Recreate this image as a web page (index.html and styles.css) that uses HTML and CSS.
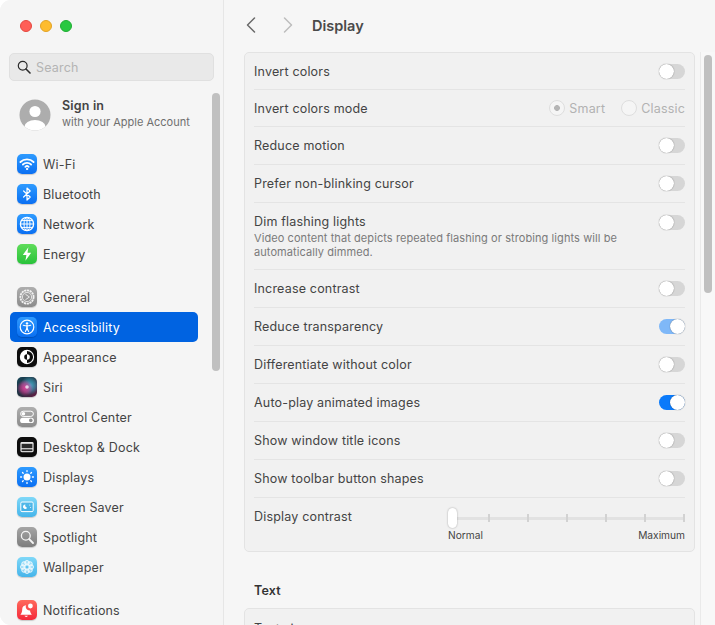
FILE: index.html
```html
<!DOCTYPE html>
<html lang="en">
<head>
    <meta charset="UTF-8">
    <meta name="viewport" content="width=device-width, initial-scale=1.0">
    <title>Display</title>
    <link rel="stylesheet" href="styles.css">
</head>
<body>
    <div class="window">
        <aside class="sidebar">
            <div class="traffic">
                <span class="light red"></span>
                <span class="light yellow"></span>
                <span class="light green"></span>
            </div>
            <div class="search">
                <svg class="search-icon" width="14" height="14" viewBox="0 0 14 14"><circle cx="5.7" cy="5.7" r="4.4" fill="none" stroke="#2b2b2b" stroke-width="1.2"/><path d="M9 9l4 4" stroke="#2b2b2b" stroke-width="1.6" stroke-linecap="round"/></svg>
                <span>Search</span>
            </div>
            <div class="account">
                <svg class="avatar" width="32" height="32" viewBox="0 0 32 32"><defs><clipPath id="av"><circle cx="16" cy="16" r="15.5"/></clipPath></defs><circle cx="16" cy="16" r="15.5" fill="#adadad"/><circle cx="16" cy="12.5" r="5.6" fill="#fff"/><ellipse cx="16" cy="27.5" rx="10.5" ry="6.5" fill="#fff" clip-path="url(#av)"/></svg>
                <div>
                    <div class="account-name">Sign in</div>
                    <div class="account-sub">with your Apple Account</div>
                </div>
            </div>

            <nav class="nav-group first">
                <a class="nav-item"><span class="icon blue"><svg width="20" height="20" viewBox="0 0 20 20" fill="none" stroke="#fff" stroke-linecap="round"><path d="M3.4 8a9.400 9.400 0 0 1 13.200 0" stroke-width="1.800"/><path d="M5.900 10.500a5.900 5.900 0 0 1 8.200 0" stroke-width="1.800"/><path d="M8.300 12.800a2.500 2.500 0 0 1 3.400 0" stroke-width="1.700"/><circle cx="10" cy="15" r=".7" fill="#fff" stroke-width="1"/></svg></span>Wi-Fi</a>
                <a class="nav-item"><span class="icon blue"><svg width="20" height="20" viewBox="0 0 20 20" fill="none" stroke="#fff" stroke-width="1.200" stroke-linejoin="round" stroke-linecap="round"><path d="M6.600 7l6.600 6-3.200 3V4l3.200 3-6.600 6"/></svg></span>Bluetooth</a>
                <a class="nav-item"><span class="icon blue"><svg width="20" height="20" viewBox="0 0 20 20" fill="none" stroke="#fff" stroke-width="1"><circle cx="10" cy="10" r="6.600" stroke-width="1.300"/><ellipse cx="10" cy="10" rx="3" ry="6.600"/><path d="M10 3.400v13.200M3.400 10h13.200M4.600 6.600h10.800M4.600 13.400h10.800"/></svg></span>Network</a>
                <a class="nav-item"><span class="icon leaf"><svg width="20" height="20" viewBox="0 0 20 20"><path d="M11.400 3.200L5.800 11h3.600l-1 5.800 5.800-8h-3.700z" fill="#fff"/></svg></span>Energy</a>
            </nav>

            <nav class="nav-group">
                <a class="nav-item"><span class="icon gray"><svg width="20" height="20" viewBox="0 0 20 20" fill="none" stroke="#f2f2f2"><circle cx="10" cy="10" r="6.600" stroke-width="1.800" stroke-dasharray="2.200 .6"/><circle cx="10" cy="10" r="4.600" stroke-width=".8"/><path d="M8.400 7.200l4 2.800-4 2.800" stroke-width=".9"/></svg></span>General</a>
                <a class="nav-item active"><span class="icon blue"><svg width="20" height="20" viewBox="0 0 20 20" fill="none" stroke="#fff" stroke-linecap="round"><circle cx="10" cy="10" r="6.800" stroke-width="1.200"/><circle cx="10" cy="6.400" r="1.200" fill="#fff" stroke="none"/><path d="M6.300 8.200c2.400.7 5 .7 7.400 0" stroke-width="1.100"/><path d="M10 8.800v2.600" stroke-width="1.500"/><path d="M10 11.200l-1.600 3.400M10 11.200l1.600 3.400" stroke-width="1.100"/></svg></span>Accessibility</a>
                <a class="nav-item"><span class="icon black"><svg width="20" height="20" viewBox="0 0 20 20"><circle cx="10" cy="10" r="6.600" fill="#0d0d0d" stroke="#fff" stroke-width="1.100"/><path d="M10 3.400a6.600 6.600 0 0 0 0 13.200z" fill="#fff"/><path d="M10 7.200a2.800 2.800 0 0 0 0 5.600z" fill="#0d0d0d"/><path d="M10 7.200a2.800 2.800 0 0 1 0 5.600z" fill="#fff"/></svg></span>Appearance</a>
                <a class="nav-item"><span class="icon siri"><svg width="20" height="20" viewBox="0 0 20 20"><circle cx="10" cy="10" r="1.800" fill="#efe9f4" fill-opacity=".85"/></svg></span>Siri</a>
                <a class="nav-item"><span class="icon gray"><svg width="20" height="20" viewBox="0 0 20 20"><rect x="3.600" y="4.200" width="12.800" height="5.200" rx="2.600" fill="none" stroke="#fff"/><circle cx="6.400" cy="6.800" r="1.800" fill="#fff"/><rect x="3.100" y="10.700" width="13.800" height="5.400" rx="2.700" fill="#fff"/><circle cx="13.800" cy="13.400" r="1.800" fill="#8e8e8e"/></svg></span>Control Center</a>
                <a class="nav-item"><span class="icon black"><svg width="20" height="20" viewBox="0 0 20 20"><rect x="3.400" y="5" width="13.200" height="10.200" rx="1.400" fill="#e8e8e8"/><rect x="4.600" y="6.800" width="10.800" height="4.400" fill="#2a2a2a"/><rect x="4.600" y="12.300" width="10.800" height="1.800" fill="#2a2a2a"/></svg></span>Desktop &amp; Dock</a>
                <a class="nav-item"><span class="icon blue"><svg width="20" height="20" viewBox="0 0 20 20" stroke="#fff" stroke-width="1.300" stroke-linecap="round"><circle cx="10" cy="10" r="3.500" fill="#fff" stroke="none"/><path d="M10 3.600v1M10 15.400v1M3.600 10h1M15.400 10h1M5.500 5.500l.7.7M13.800 13.800l.7.7M5.500 14.500l.7-.7M13.800 6.200l.7-.7"/></svg></span>Displays</a>
                <a class="nav-item"><span class="icon sky"><svg width="20" height="20" viewBox="0 0 20 20"><rect x="3.800" y="5" width="12.400" height="9.600" rx="1.200" fill="#2f9fdc" fill-opacity=".45" stroke="#fff" stroke-width="1"/><path d="M8.400 7.600a2.200 2.200 0 1 0 1.700 3.200 2.300 2.300 0 0 1-1.700-3.200z" fill="#fff"/><circle cx="12.800" cy="8" r=".6" fill="#fff"/><circle cx="13.600" cy="10.600" r=".5" fill="#fff"/></svg></span>Screen Saver</a>
                <a class="nav-item"><span class="icon gray-dark"><svg width="20" height="20" viewBox="0 0 20 20" fill="none" stroke="#f4f4f4"><circle cx="8.800" cy="8.800" r="4.400" stroke-width="1.300"/><path d="M12.200 12.200l3.800 3.800" stroke-width="1.900" stroke-linecap="round"/></svg></span>Spotlight</a>
                <a class="nav-item"><span class="icon sky"><svg width="20" height="20" viewBox="0 0 20 20" fill="#fff" fill-opacity=".35" stroke="#fff" stroke-width=".8"><circle cx="10" cy="5.800" r="2.300"/><circle cx="10" cy="14.200" r="2.300"/><circle cx="5.800" cy="10" r="2.300"/><circle cx="14.200" cy="10" r="2.300"/><circle cx="7" cy="7" r="2.300"/><circle cx="13" cy="7" r="2.300"/><circle cx="7" cy="13" r="2.300"/><circle cx="13" cy="13" r="2.300"/></svg></span>Wallpaper</a>
            </nav>

            <nav class="nav-group">
                <a class="nav-item"><span class="icon red-icon"><svg width="20" height="20" viewBox="0 0 20 20" fill="#fff"><path d="M9 5.200a4.200 4.200 0 0 0-3.800 4.200c0 2.400-.6 3.600-1.600 4.800v.6h11v-.6c-.9-1-1.400-2-1.500-3.700A3.800 3.800 0 0 1 9 5.200z"/><path d="M7.400 15.800a2 2 0 0 0 3.600 0z"/><circle cx="13.400" cy="6" r="2.400"/></svg></span>Notifications</a>
            </nav>

            <div class="scroll-thumb side-thumb"></div>
        </aside>

        <main class="content">
            <header class="toolbar">
                <svg class="chevron" width="12" height="18" viewBox="0 0 12 18" fill="none" stroke="#6a6a6a" stroke-width="1.500" stroke-linecap="round" stroke-linejoin="round"><path d="M9.500 2L2.500 9l7 7"/></svg>
                <svg class="chevron next" width="12" height="18" viewBox="0 0 12 18" fill="none" stroke="#bdbdbd" stroke-width="1.500" stroke-linecap="round" stroke-linejoin="round"><path d="M2.500 2l7 7-7 7"/></svg>
                <h1>Display</h1>
            </header>

            <div class="scroll-area">
                <section class="panel">
                    <div class="row short"><span>Invert colors</span><span class="toggle"></span></div>
                    <div class="row short">
                        <span>Invert colors mode</span>
                        <div class="radios">
                            <span class="radio checked">Smart</span>
                            <span class="radio">Classic</span>
                        </div>
                    </div>
                    <div class="row"><span>Reduce motion</span><span class="toggle"></span></div>
                    <div class="row"><span>Prefer non-blinking cursor</span><span class="toggle"></span></div>
                    <div class="row tall">
                        <div>
                            <div>Dim flashing lights</div>
                            <p class="hint">Video content that depicts repeated flashing or strobing lights will be automatically dimmed.</p>
                        </div>
                        <span class="toggle"></span>
                    </div>
                    <div class="row"><span>Increase contrast</span><span class="toggle"></span></div>
                    <div class="row"><span>Reduce transparency</span><span class="toggle on dim"></span></div>
                    <div class="row"><span>Differentiate without color</span><span class="toggle"></span></div>
                    <div class="row"><span>Auto-play animated images</span><span class="toggle on"></span></div>
                    <div class="row"><span>Show window title icons</span><span class="toggle"></span></div>
                    <div class="row"><span>Show toolbar button shapes</span><span class="toggle"></span></div>
                    <div class="row slider-row">
                        <span>Display contrast</span>
                        <div class="slider">
                            <div class="track">
                                <i></i><i></i><i></i><i></i><i></i><i></i>
                                <span class="knob"></span>
                            </div>
                            <div class="slider-labels"><span>Normal</span><span>Maximum</span></div>
                        </div>
                    </div>
                </section>

                <h2>Text</h2>
                <section class="panel">
                    <div class="row"><span>Text size</span></div>
                </section>
                <div class="scroll-thumb main-thumb"></div>
            </div>
        </main>
    </div>
</body>
</html>
```

FILE: styles.css
```css
* {
    box-sizing: border-box;
}

html, body {
    margin: 0;
    padding: 0;
    height: 100%;
    overflow: hidden;
    background-color: #fff;
}

body {
    font-family: Inter, "Noto Sans", sans-serif;
    font-size: 12.5px;
    letter-spacing: 0.18px;
    color: #444;
}

.window {
    display: flex;
    width: 715px;
    height: 625px;
    overflow: hidden;
    border-radius: 11px 0 0 11px;
    background-color: #f6f6f6;
}

/* sidebar */
.sidebar {
    position: relative;
    width: 224px;
    height: 625px;
    flex-shrink: 0;
    overflow: hidden;
    padding: 0 9px 0 9px;
    background-color: #f5f5f5;
    border-right: 1px solid #e6e6e6;
}

.traffic {
    display: flex;
    gap: 8px;
    padding: 20px 0 0 11px;
    height: 53px;
}

.light {
    width: 12px;
    height: 12px;
    border-radius: 50%;
}

.red { background-color: #ff5f57; border: 1px solid #e5483f; }
.yellow { background-color: #febc2e; border: 1px solid #e2a325; }
.green { background-color: #28c840; border: 1px solid #1fae33; }

.search {
    display: flex;
    align-items: center;
    gap: 5px;
    width: 205px;
    height: 28px;
    padding-left: 7px;
    background-color: #e9e9e9;
    border: 1px solid #e0e0e0;
    border-radius: 5px;
    color: #b4b4b4;
}

.account {
    display: flex;
    align-items: center;
    gap: 11px;
    height: 36px;
    margin-top: 15px;
    padding-left: 10px;
}

.avatar {
    flex-shrink: 0;
    margin-bottom: -1px;
}

.account-name {
    font-weight: 600;
    color: #444;
    line-height: 17px;
}

.account-sub {
    font-size: 11px;
    letter-spacing: 0;
    color: #6f6f6f;
    line-height: 16px;
}

.account > div {
    margin-top: -2px;
}

.nav-group {
    width: 188px;
    margin-left: 1px;
    margin-top: 13px;
}

.nav-group.first {
    margin-top: 17px;
}

.nav-item {
    display: flex;
    align-items: center;
    gap: 6px;
    height: 30px;
    padding-left: 7px;
    border-radius: 5px;
}

.nav-item.active {
    background-color: #0063e1;
    color: #fff;
}

.icon {
    width: 20px;
    height: 20px;
    flex-shrink: 0;
    border-radius: 5px;
    box-shadow: 0 1px 1px rgba(0, 0, 0, 0.18);
}

.icon svg {
    display: block;
}

.blue { background: linear-gradient(#2e9bff, #0a6ff2); }
.leaf { background: linear-gradient(#5fdc5a, #28c23a); }
.gray { background: linear-gradient(#aeaeae, #8b8b8b); }
.gray-dark { background: linear-gradient(#a5a5a5, #7d7d7d); }
.black { background-color: #0d0d0d; }
.sky { background: linear-gradient(#7fd8f8, #45b4ea); }
.red-icon { background: linear-gradient(#ff6a5c, #f5283a); }
.siri {
    background:
        radial-gradient(circle at 40% 55%, rgba(225, 60, 150, 0.95) 0, rgba(225, 60, 150, 0.55) 28%, transparent 50%),
        radial-gradient(circle at 65% 42%, rgba(70, 190, 220, 0.9) 0, rgba(70, 190, 220, 0.45) 32%, transparent 55%),
        linear-gradient(135deg, #17475a, #20303f 50%, #6a1c46);
}

.scroll-thumb {
    position: absolute;
    width: 8px;
    border-radius: 4px;
    background-color: #c0c0c0;
}

.side-thumb {
    left: 212px;
    top: 93px;
    height: 278px;
}

/* main content */
.content {
    flex: 1;
    min-width: 0;
    height: 625px;
    display: flex;
    flex-direction: column;
}

.toolbar {
    display: flex;
    align-items: center;
    height: 52px;
    padding: 0 0 2px 21px;
}

.chevron.next {
    margin-left: 25px;
}

.toolbar h1 {
    margin: 0 0 0 18px;
    font-size: 14.5px;
    font-weight: 600;
    letter-spacing: 0;
    color: #4a4a4a;
}

.scroll-area {
    position: relative;
    flex: 1;
    padding-left: 20px;
    width: 491px;
    overflow: hidden;
    background-color: #f6f6f6;
}

.scroll-area::after {
    content: "";
    position: absolute;
    top: 0;
    bottom: 0;
    left: 476px;
    width: 15px;
    background-color: #f8f8f8;
    border-left: 1px solid #eaeaea;
}

.main-thumb {
    left: 480px;
    top: 3px;
    height: 238px;
    z-index: 1;
}

.panel {
    width: 451px;
    padding: 0 9px;
    background-color: #f1f1f1;
    border: 1px solid #e3e3e3;
    border-radius: 5px;
}

.row {
    display: flex;
    align-items: center;
    justify-content: space-between;
    height: 38px;
    border-bottom: 1px solid #e4e4e4;
}

.row:last-child {
    border-bottom: 0;
}

.row.short {
    height: 37px;
}

.row.tall {
    height: 67px;
    align-items: flex-start;
    padding-top: 11px;
}

.hint {
    margin: 2px 0 0;
    width: 395px;
    font-size: 11px;
    letter-spacing: 0.08px;
    line-height: 14px;
    color: #7a7a7a;
}

.toggle {
    position: relative;
    flex-shrink: 0;
    width: 26px;
    height: 15px;
    border-radius: 8px;
    background-color: #d6d6d6;
}

.toggle::after {
    content: "";
    position: absolute;
    top: 0;
    left: 0;
    width: 15px;
    height: 15px;
    border-radius: 50%;
    background-color: #fff;
    box-shadow: 0 0 1px rgba(0, 0, 0, 0.6);
}

.toggle.on {
    background-color: #0a7afa;
}

.toggle.on.dim {
    background-color: #7fb8f8;
}

.toggle.on::after {
    left: 11px;
}

.row.tall .toggle {
    margin-top: 1px;
}

.radios {
    display: flex;
    gap: 16px;
    color: #b2b2b2;
}

.radio {
    display: flex;
    align-items: center;
    gap: 4px;
}

.radio::before {
    content: "";
    width: 14px;
    height: 14px;
    border-radius: 50%;
    background-color: #f5f5f5;
    border: 1px solid #dedede;
}

.radio.checked::before {
    background: radial-gradient(circle, #b5b5b5 0, #b5b5b5 2.6px, #f5f5f5 3.2px);
}

.slider-row {
    height: 53px;
    align-items: flex-start;
    padding-top: 11px;
}

.slider {
    width: 237px;
    margin-top: 1px;
    font-size: 10.2px;
    letter-spacing: 0;
}

.track {
    position: relative;
    display: flex;
    justify-content: space-between;
    align-items: center;
    height: 8px;
    margin-top: 4px;
    padding-left: 40px;
    background: linear-gradient(#e2e2e2, #e2e2e2) center / 100% 3px no-repeat;
}

.track i {
    width: 2px;
    height: 8px;
    background-color: #d2d2d2;
}

.knob {
    position: absolute;
    left: 0;
    top: -6px;
    width: 9px;
    height: 20px;
    border-radius: 5px;
    background-color: #fff;
    box-shadow: 0 0 2px rgba(0, 0, 0, 0.35);
}

.slider-labels {
    display: flex;
    justify-content: space-between;
    margin-top: 7px;
    color: #444;
}

h2 {
    margin: 31px 0 10px 10px;
    font-size: 12.5px;
    font-weight: 600;
    color: #333;
}
```
